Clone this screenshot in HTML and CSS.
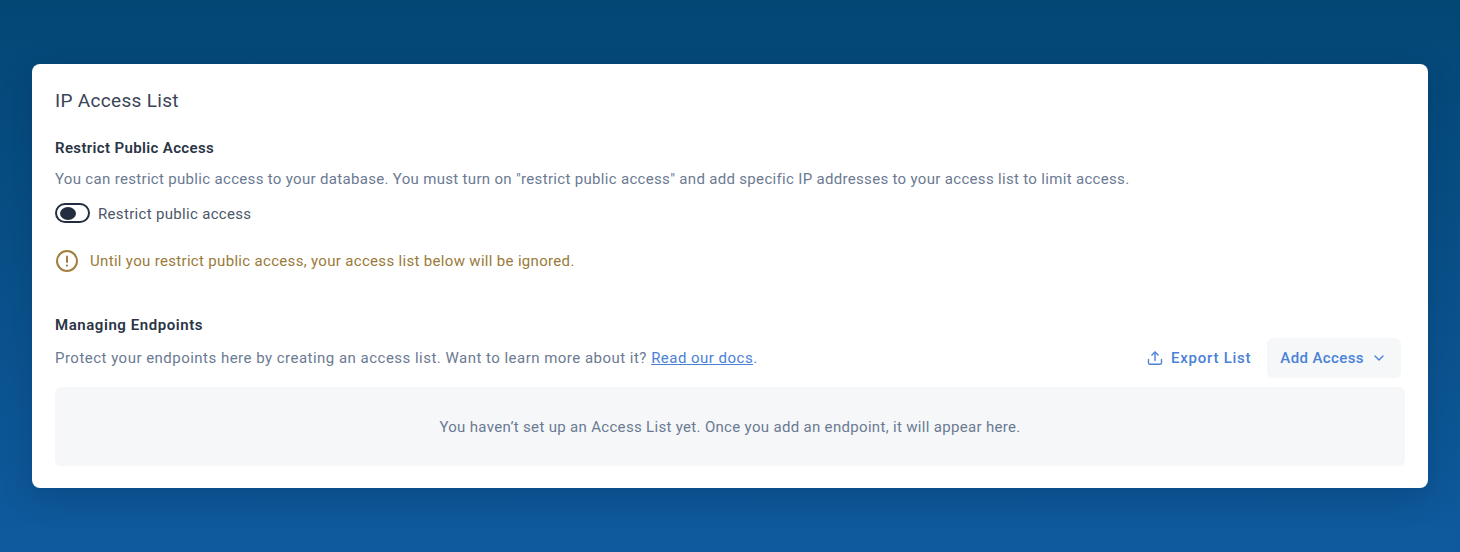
FILE: index.html
```html
<!DOCTYPE html>
<html lang="en">
<head>
<meta charset="utf-8">
<title>IP Access List</title>
<link rel="stylesheet" href="styles.css">
</head>
<body>
<main class="card">
  <h1 class="title">IP Access List</h1>
  <h2 class="heading">Restrict Public Access</h2>
  <p class="desc">You can restrict public access to your database. You must turn on "restrict public access" and add specific IP addresses to your access list to limit access.</p>
  <div class="toggle-row">
    <span class="toggle"><span class="knob"></span></span>
    <span class="toggle-label">Restrict public access</span>
  </div>
  <div class="warning">
    <svg class="warn-icon" width="24" height="24" viewBox="0 0 24 24" fill="none" stroke="#a07f3f" stroke-width="2" stroke-linecap="round"><circle cx="12" cy="12" r="10"/><path d="M12 7.5v5.5"/><path d="M12 16.5v.2"/></svg>
    <span>Until you restrict public access, your access list below will be ignored.</span>
  </div>
  <h2 class="heading endpoints">Managing Endpoints</h2>
  <div class="action-row">
    <p class="desc flush">Protect your endpoints here by creating an access list. Want to learn more about it? <a class="link" href="#">Read our docs</a><span class="link-dot">.</span></p>
    <div class="actions">
      <button class="btn export" type="button">
        <svg width="16" height="16" viewBox="0 0 16 16" fill="none" stroke="#4a82d8" stroke-width="1.4" stroke-linecap="round" stroke-linejoin="round"><path d="M8 10.5V2.2"/><path d="M4.9 5.1 8 2l3.1 3.1"/><path d="M1.5 9.5v3.2c0 .9.7 1.6 1.6 1.6h9.8c.9 0 1.6-.7 1.6-1.6V9.5"/></svg>
        Export List
      </button>
      <button class="btn add" type="button">
        Add Access
        <svg width="12" height="12" viewBox="0 0 12 12" fill="none" stroke="#4a82d8" stroke-width="1.4" stroke-linecap="round" stroke-linejoin="round"><path d="M2 4l4 4 4-4"/></svg>
      </button>
    </div>
  </div>
  <div class="empty">You haven’t set up an Access List yet. Once you add an endpoint, it will appear here.</div>
</main>
</body>
</html>
```
FILE: styles.css
```css
* { box-sizing: border-box; }
html, body { height: 100%; }
body {
  margin: 0;
  height: 552px;
  padding: 64px 32px;
  overflow: hidden;
  background: linear-gradient(180deg, #034775 0%, #0f5a9e 100%);
  font-family: Roboto, "Liberation Sans", sans-serif;
  letter-spacing: 0.32px;
}
.card {
  height: 424px;
  padding: 24px 23px 22px;
  background: #fff;
  border-radius: 8px;
  box-shadow: 0 10px 30px rgba(0, 30, 70, 0.22);
}
.title {
  margin: 0;
  font-size: 19px;
  line-height: 26px;
  font-weight: 400;
  color: #3a4456;
}
.heading {
  margin: 0;
  font-size: 15px;
  line-height: 20px;
  font-weight: 600;
  color: #2a3445;
  letter-spacing: 0.36px;
}
.title + .heading { margin-top: 24px; }
.desc {
  margin: 11px 0 0;
  font-size: 15px;
  line-height: 20px;
  color: #6b7a92;
}
.desc.flush { margin: 0; letter-spacing: 0.48px; }
.toggle-row {
  display: flex;
  align-items: center;
  gap: 8px;
  margin-top: 12px;
  height: 24px;
}
.toggle {
  display: flex;
  align-items: center;
  width: 35px;
  height: 20px;
  padding: 0 3px;
  border: 2px solid #232d40;
  border-radius: 10px;
}
.knob {
  width: 16px;
  height: 13px;
  border-radius: 50%;
  background: #232d40;
}
.toggle-label {
  padding-top: 1px;
  font-size: 15px;
  color: #4b5768;
}
.warning {
  display: flex;
  align-items: center;
  gap: 11px;
  margin-top: 24px;
  font-size: 15px;
  color: #9a7a3a;
}
.endpoints { margin-top: 42px; letter-spacing: 0.56px; }
.action-row {
  display: flex;
  align-items: center;
  justify-content: space-between;
  margin-top: 3px;
  padding-right: 4px;
}
.link { color: #4a82d8; }
.link-dot { color: #4a82d8; }
.actions {
  display: flex;
  align-items: center;
  gap: 3px;
}
.btn {
  display: inline-flex;
  align-items: center;
  height: 40px;
  padding: 0 13px;
  border: 0;
  border-radius: 6px;
  background: transparent;
  color: #4a82d8;
  font: 500 15px Roboto, "Liberation Sans", sans-serif;
  letter-spacing: 0.4px;
}
.export { gap: 8px; padding-right: 13px; letter-spacing: 0.75px; }
.add { gap: 9px; background: #f5f7f9; padding-right: 16px; }
.empty {
  display: flex;
  align-items: center;
  justify-content: center;
  height: 79px;
  margin-top: 9px;
  border-radius: 6px;
  background: #f5f7f9;
  font-size: 15px;
  color: #6b7a92;
}
```
